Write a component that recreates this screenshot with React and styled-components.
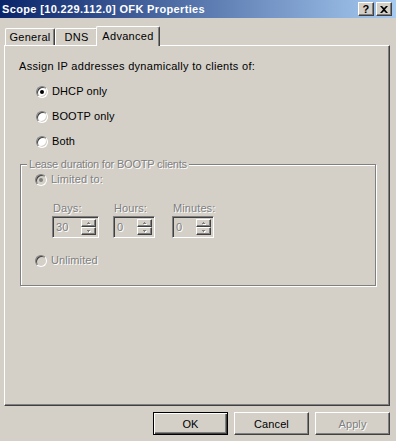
import React from 'react';
import styled, { createGlobalStyle, css } from 'styled-components';

const Global = createGlobalStyle`
  html, body {
    margin: 0;
    padding: 0;
    background: #d4d0c8;
  }
  body {
    font-family: 'Liberation Sans', Arial, sans-serif;
    font-size: 11px;
    letter-spacing: 0.1px;
    color: #000000;
  }
`;

const raised = css`
  border-top: 1px solid #ffffff;
  border-left: 1px solid #ffffff;
  border-right: 1px solid #404040;
  border-bottom: 1px solid #404040;
  box-shadow: inset -1px -1px 0 #808080;
`;

const disabledText = css`
  color: #808080;
  text-shadow: 1px 1px 0 #ffffff;
`;

const Window = styled.div`
  width: 396px;
  height: 441px;
  display: flex;
  flex-direction: column;
  overflow: hidden;
  background: #d4d0c8;
`;

const TitleBar = styled.div`
  height: 18px;
  display: flex;
  align-items: center;
  gap: 2px;
  padding: 0 4px 0 2px;
  background: linear-gradient(to right, #0a246a, #a6caf0);
`;

const Title = styled.div`
  flex: 1;
  color: #ffffff;
  font-weight: bold;
  font-size: 11px;
  letter-spacing: 0.35px;
  white-space: nowrap;
`;

const CaptionButton = styled.div`
  width: 16px;
  height: 14px;
  box-sizing: border-box;
  background: #d4d0c8;
  ${raised};
  display: flex;
  align-items: center;
  justify-content: center;
  font-weight: bold;
  font-size: 11px;
  line-height: 12px;
`;

const Body = styled.div`
  flex: 1;
  display: flex;
  flex-direction: column;
  padding: 8px 6px 0 4px;
`;

const TabRow = styled.div`
  display: flex;
  align-items: flex-end;
  height: 19px;
  padding-left: 1px;
`;

const Tab = styled.div`
  box-sizing: border-box;
  width: ${p => p.$width}px;
  height: ${p => (p.$active ? 20 : 17)}px;
  margin-bottom: ${p => (p.$active ? -1 : 0)}px;
  margin-left: ${p => (p.$active ? -2 : 0)}px;
  position: relative;
  z-index: ${p => (p.$active ? 1 : 0)};
  background: #d4d0c8;
  border-top: 1px solid #ffffff;
  border-left: 1px solid #ffffff;
  border-right: 1px solid #404040;
  border-top-left-radius: 2px;
  border-top-right-radius: 2px;
  box-shadow: inset -1px 0 0 #808080;
  display: flex;
  justify-content: center;
  padding-top: ${p => (p.$active ? 3 : 2)}px;
  line-height: 13px;
  letter-spacing: 0.3px;
`;

const Panel = styled.div`
  box-sizing: border-box;
  height: 361px;
  ${raised};
  padding: 14px 14px 0 14px;
  display: flex;
  flex-direction: column;
`;

const Heading = styled.div`
  line-height: 13px;
  letter-spacing: 0.3px;
`;

const RadioList = styled.div`
  display: flex;
  flex-direction: column;
  gap: 12px;
  margin: 12px 0 0 17px;
`;

const RadioRow = styled.div`
  display: flex;
  align-items: center;
  gap: 4px;
  height: 13px;
  line-height: 13px;
  margin-top: ${p => p.$top || 0}px;
  ${p => p.$disabled && disabledText};
`;

const RadioCircle = styled.span`
  flex: none;
  width: 12px;
  height: 12px;
  box-sizing: border-box;
  border-radius: 50%;
  border: 1px solid;
  border-color: #808080 #ffffff #ffffff #808080;
  box-shadow: inset 1px 1px 0 #404040, inset -1px -1px 0 #d4d0c8;
  background: ${p => (p.$disabled ? '#d4d0c8' : '#ffffff')};
  display: flex;
  align-items: center;
  justify-content: center;
  &::after {
    content: '';
    width: 4px;
    height: 4px;
    border-radius: 50%;
    background: ${p => (p.$checked ? (p.$disabled ? '#808080' : '#000000') : 'transparent')};
  }
`;

const GroupBox = styled.div`
  position: relative;
  box-sizing: border-box;
  width: 356px;
  height: 122px;
  margin: 16px 0 0 1px;
  border: 1px solid #808080;
  box-shadow: inset 1px 1px 0 #ffffff, 1px 1px 0 #ffffff;
  padding: 8px 0 0 14px;
  display: flex;
  flex-direction: column;
`;

const Legend = styled.span`
  position: absolute;
  top: -7px;
  left: 6px;
  padding: 0 2px 0 2px;
  background: #d4d0c8;
  line-height: 13px;
  letter-spacing: -0.2px;
  ${disabledText};
`;

const SpinRow = styled.div`
  display: flex;
  margin: 16px 0 0 17px;
`;

const SpinField = styled.div`
  display: flex;
  flex-direction: column;
  gap: 1px;
  margin-right: ${p => p.$gap || 0}px;
`;

const SpinLabel = styled.div`
  line-height: 13px;
  padding-left: 1px;
  ${disabledText};
`;

const SpinBox = styled.div`
  box-sizing: border-box;
  width: ${p => p.$width}px;
  height: 22px;
  display: flex;
  padding: 2px;
  border: 1px solid;
  border-color: #808080 #ffffff #ffffff #808080;
  box-shadow: inset 1px 1px 0 #404040, inset -1px -1px 0 #d4d0c8;
  background: #d4d0c8;
`;

const SpinValue = styled.div`
  flex: 1;
  line-height: 16px;
  padding-left: 1px;
  ${disabledText};
`;

const SpinButtons = styled.div`
  display: flex;
  flex-direction: column;
  width: 15px;
`;

const SpinArrow = styled.div`
  box-sizing: border-box;
  flex: 1;
  ${raised};
  display: flex;
  align-items: center;
  justify-content: center;
`;

const ButtonRow = styled.div`
  display: flex;
  justify-content: flex-end;
  gap: 6px;
  margin-top: 6px;
`;

const Button = styled.div`
  box-sizing: border-box;
  width: 75px;
  height: 23px;
  display: flex;
  align-items: center;
  justify-content: center;
  font-size: 11px;
  ${p =>
    p.$default
      ? css`
          border: 1px solid #000000;
          box-shadow: inset 1px 1px 0 #ffffff, inset -1px -1px 0 #404040, inset -2px -2px 0 #808080;
        `
      : raised};
  ${p => p.$disabled && disabledText};
`;

const Arrow = ({ up }) => (
  <svg width="6" height="4" viewBox="0 0 6 4">
    {up ? (
      <>
        <path d="M2 1h1v1h1v1H1V2h1z" fill="#ffffff" transform="translate(1 1)" />
        <path d="M2 1h1v1h1v1H1V2h1z" fill="#808080" />
      </>
    ) : (
      <>
        <path d="M1 1h3v1H3v1H2V2H1z" fill="#ffffff" transform="translate(1 1)" />
        <path d="M1 1h3v1H3v1H2V2H1z" fill="#808080" />
      </>
    )}
  </svg>
);

const Radio = ({ label, checked, disabled, top }) => (
  <RadioRow $disabled={disabled} $top={top}>
    <RadioCircle $checked={checked} $disabled={disabled} />
    {label}
  </RadioRow>
);

const Spin = ({ label, value, width, gap }) => (
  <SpinField $gap={gap}>
    <SpinLabel>{label}</SpinLabel>
    <SpinBox $width={width}>
      <SpinValue>{value}</SpinValue>
      <SpinButtons>
        <SpinArrow>
          <Arrow up />
        </SpinArrow>
        <SpinArrow>
          <Arrow />
        </SpinArrow>
      </SpinButtons>
    </SpinBox>
  </SpinField>
);

const App = () => {
  return (
    <Window>
      <Global />
      <TitleBar>
        <Title>Scope [10.229.112.0] OFK Properties</Title>
        <CaptionButton>?</CaptionButton>
        <CaptionButton>
          <svg width="8" height="7" viewBox="0 0 8 7">
            <path d="M0 0h2l2 2 2-2h2L5 3.5 8 7H6L4 5 2 7H0l3-3.5z" fill="#000000" />
          </svg>
        </CaptionButton>
      </TitleBar>
      <Body>
        <TabRow>
          <Tab $width={50}>General</Tab>
          <Tab $width={43}>DNS</Tab>
          <Tab $width={64} $active>
            Advanced
          </Tab>
        </TabRow>
        <Panel>
          <Heading>Assign IP addresses dynamically to clients of:</Heading>
          <RadioList>
            <Radio label="DHCP only" checked />
            <Radio label="BOOTP only" />
            <Radio label="Both" />
          </RadioList>
          <GroupBox>
            <Legend>Lease duration for BOOTP clients</Legend>
            <Radio label="Limited to:" checked disabled />
            <SpinRow>
              <Spin label="Days:" value="30" width={47} gap={14} />
              <Spin label="Hours:" value="0" width={42} gap={17} />
              <Spin label="Minutes:" value="0" width={42} />
            </SpinRow>
            <Radio label="Unlimited" disabled top={16} />
          </GroupBox>
        </Panel>
        <ButtonRow>
          <Button $default>OK</Button>
          <Button>Cancel</Button>
          <Button $disabled>Apply</Button>
        </ButtonRow>
      </Body>
    </Window>
  );
};

export default App;
